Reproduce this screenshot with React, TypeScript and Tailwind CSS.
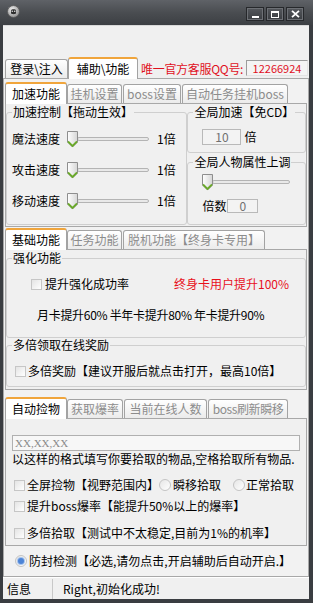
import React from "react";

type TabProps = { label: string; active?: boolean; w: string; dark?: boolean; cls?: string };

function Tab({ label, active, w, dark, cls = "" }: TabProps) {
  if (active) {
    return (
      <div
        className={`${w} ${cls} relative z-10 -mb-px flex h-[22px] shrink-0 items-center justify-center whitespace-nowrap rounded-t-[3px] border border-b-0 border-[#a3a3a3] border-t-2 border-t-[#f0a53c] bg-white pb-[1px] text-black`}
      >
        {label}
      </div>
    );
  }
  return (
    <div
      className={`${w} ${cls} flex h-[19px] shrink-0 items-center justify-center whitespace-nowrap rounded-t-[3px] border border-b-0 border-[#a3a3a3] bg-gradient-to-b from-white to-[#ebebeb] ${dark ? "text-black" : "text-[#8c8c8c]"}`}
    >
      {label}
    </div>
  );
}

function Checkbox() {
  return <span className="inline-block h-[11px] w-[11px] shrink-0 border border-[#c6c6c6] bg-gradient-to-br from-[#e4e4e4] to-white" />;
}

function Radio({ checked }: { checked?: boolean }) {
  return (
    <span className="flex h-[12px] w-[12px] shrink-0 items-center justify-center rounded-full border border-[#c4c4c4] bg-gradient-to-br from-[#e6e6e6] to-white">
      {checked && <span className="h-[6px] w-[6px] rounded-full bg-[#4d84d6] shadow-[0_0_0_1px_#a9c6ee]" />}
    </span>
  );
}

function Thumb() {
  return (
    <svg width="11" height="17" viewBox="0 0 11 17" className="relative z-10 shrink-0">
      <defs>
        <linearGradient id="thumbg" x1="0" x2="1" y1="0" y2="0">
          <stop offset="0" stopColor="#ffffff" />
          <stop offset="1" stopColor="#d6d6d6" />
        </linearGradient>
      </defs>
      <path d="M0.5 0.5H10.5V11L5.5 16L0.5 11Z" fill="url(#thumbg)" stroke="#8e8e8e" />
      <path d="M1 10.5L5.5 15L10 10.5" fill="none" stroke="#6aa92a" strokeWidth="1.8" />
    </svg>
  );
}

function Slider({ track }: { track: string }) {
  return (
    <div className="flex items-start">
      <Thumb />
      <span className={`${track} -ml-[1px] mt-[6px] h-[4px] rounded-[2px] border border-[#b4b4b4] bg-[#e9e9e9]`} />
    </div>
  );
}

function Legend({ children }: { children: React.ReactNode }) {
  return <legend className="ml-[5px] px-[1px] leading-[12px]">{children}</legend>;
}

function TitleBar() {
  return (
    <div className="flex h-[25px] shrink-0 items-start bg-gradient-to-b from-[#5f6267] via-[#4a4d51] to-[#3c3f43]">
      <svg width="13" height="13" viewBox="0 0 13 13" className="ml-[7px] mt-[5px]">
        <defs>
          <radialGradient id="ico" cx="0.4" cy="0.35" r="0.7">
            <stop offset="0" stopColor="#f2f2f2" />
            <stop offset="1" stopColor="#8a8a8a" />
          </radialGradient>
        </defs>
        <circle cx="6.5" cy="6.5" r="6" fill="url(#ico)" stroke="#555" strokeWidth="0.8" />
        <path d="M4 5.5C4 3.8 9 3.8 9 5.5V8C9 9.6 4 9.6 4 8Z" fill="#2e2e2e" />
        <circle cx="5.3" cy="6.2" r="0.8" fill="#ddd" />
        <circle cx="7.7" cy="6.2" r="0.8" fill="#ddd" />
      </svg>
      <div className="ml-auto mr-[9px] mt-[7px] flex gap-[2px]">
        {[0, 1, 2].map((i) => (
          <div
            key={i}
            className="flex h-[14px] w-[18px] items-center justify-center border border-[#26282b] bg-gradient-to-b from-[#55585d] to-[#3a3d41] shadow-[inset_0_0_0_1px_#6d7075]"
          >
            {i === 0 && <span className="mt-[5px] h-[2px] w-[7px] bg-white" />}
            {i === 1 && <span className="h-[7px] w-[8px] border border-t-2 border-white" />}
            {i === 2 && (
              <svg width="9" height="8" viewBox="0 0 9 8">
                <path d="M1 0.8L8 7.2M8 0.8L1 7.2" stroke="white" strokeWidth="1.8" />
              </svg>
            )}
          </div>
        ))}
      </div>
    </div>
  );
}

export default function App() {
  return (
    <div className="flex h-[603px] w-[313px] flex-col bg-[#3a3d41] font-[family-name:'Noto_Sans_CJK_SC',sans-serif] text-[12px] leading-[14px] text-black">
      <TitleBar />
      <div className="ml-[3px] mr-[4px] flex flex-1 flex-col bg-[#f0f0f0]">
        <div className="h-[32px] shrink-0 border-t border-[#d9d9d9]" />

        <div className="flex h-[21px] shrink-0 items-end pl-[2px]">
          <Tab label="登录\注入" w="w-[63px]" dark />
          <Tab label="辅助\功能" w="w-[70px]" active />
          <span className="mb-[2px] ml-[3px] shrink-0 whitespace-nowrap tracking-[-0.3px] text-[#e0101e]">唯一官方客服QQ号:</span>
          <span className="mb-[2px] ml-auto mr-[1px] flex h-[16px] w-[62px] shrink-0 items-center justify-center border border-[#9c9c9c] border-r-[#e4e4e4] border-b-[#e4e4e4] bg-[#f4f4f4] text-[11px] text-[#e0101e]">
            12266924
          </span>
        </div>

        <div className="flex flex-1 flex-col border border-[#a8a8a8] bg-[#f2f2f2] px-[1px] pt-[2px]">
          {/* row 1 */}
          <div className="flex h-[22px] shrink-0 items-end">
            <Tab label="加速功能" w="w-[62px]" active />
            <Tab label="挂机设置" w="w-[55px]" />
            <Tab label="boss设置" w="w-[58px]" cls="ml-[1px]" />
            <Tab label="自动任务挂机boss" w="w-[106px]" cls="ml-[1px]" />
          </div>
          <div className="flex h-[124px] shrink-0 border border-[#a8a8a8] bg-[#f0f0f0]">
            <fieldset className="mt-[2px] h-[119px] w-[182px] rounded-[3px] border border-[#cfcfcf]">
              <Legend>加速控制【拖动生效】</Legend>
              <div className="mt-[5px] flex flex-col pl-[5px]">
                {["魔法速度", "攻击速度", "移动速度"].map((t) => (
                  <div key={t} className="flex h-[31px] items-center">
                    <span className="w-[55px]">{t}</span>
                    <div className="mt-[2px]">
                      <Slider track="w-[72px]" />
                    </div>
                    <span className="ml-[8px]">1倍</span>
                  </div>
                ))}
              </div>
            </fieldset>
            <div className="flex w-[119px] flex-col">
              <fieldset className="mt-[2px] h-[47px] rounded-[3px] border border-[#cfcfcf]">
                <Legend>全局加速【免CD】</Legend>
                <div className="mt-[11px] flex items-center pl-[14px]">
                  <span className="flex h-[16px] w-[39px] items-center justify-center border border-[#b9b9b9] bg-[#f3f3f3] text-[#707070]">
                    10
                  </span>
                  <span className="ml-[3px]">倍</span>
                </div>
              </fieldset>
              <fieldset className="mt-[3px] h-[69px] rounded-[3px] border border-[#cfcfcf]">
                <Legend>全局人物属性上调</Legend>
                <div className="mt-[6px] pl-[14px]">
                  <Slider track="w-[78px]" />
                </div>
                <div className="mt-[8px] flex items-center pl-[14px]">
                  <span>倍数</span>
                  <span className="ml-[1px] flex h-[14px] w-[31px] items-center justify-center border border-[#b9b9b9] bg-[#f3f3f3] text-[#707070]">
                    0
                  </span>
                </div>
              </fieldset>
            </div>
          </div>

          {/* row 2 */}
          <div className="flex h-[22px] shrink-0 items-end">
            <Tab label="基础功能" w="w-[62px]" active />
            <Tab label="任务功能" w="w-[55px]" />
            <Tab label="脱机功能【终身卡专用】" w="w-[142px]" cls="ml-[1px]" />
          </div>
          <div className="flex h-[141px] shrink-0 flex-col border border-[#a8a8a8] bg-[#f0f0f0]">
            <fieldset className="mt-[2px] h-[86px] rounded-[3px] border border-[#cfcfcf]">
              <Legend>强化功能</Legend>
              <div className="mt-[12px] flex h-[16px] items-center pl-[24px]">
                <Checkbox />
                <span className="ml-[3px]">提升强化成功率</span>
                <span className="ml-[45px] text-[#e8101c]">终身卡用户提升100%</span>
              </div>
              <div className="mt-[15px] flex h-[16px] items-center pl-[30px] tracking-[-0.3px]">
                月卡提升60% 半年卡提升80% 年卡提升90%
              </div>
            </fieldset>
            <fieldset className="mt-[1px] h-[48px] rounded-[3px] border border-[#cfcfcf]">
              <Legend>多倍领取在线奖励</Legend>
              <div className="mt-[12px] flex h-[16px] items-center pl-[8px]">
                <Checkbox />
                <span className="ml-[2px]">多倍奖励【建议开服后就点击打开，最高10倍】</span>
              </div>
            </fieldset>
          </div>

          {/* row 3 */}
          <div className="mt-[4px] flex h-[24px] shrink-0 items-end">
            <Tab label="自动捡物" w="w-[62px]" active />
            <Tab label="获取爆率" w="w-[56px]" />
            <Tab label="当前在线人数" w="w-[83px]" cls="ml-[1px]" />
            <Tab label="boss刷新瞬移" w="w-[80px]" cls="ml-[1px] tracking-[-0.4px]" />
          </div>
          <div className="flex h-[128px] shrink-0 flex-col border border-[#a8a8a8] bg-[#f0f0f0] px-[6px] pt-[16px]">
            <div className="flex h-[16px] items-center border border-[#b0b0b0] bg-[#f7f7f7] pl-[2px] font-[family-name:'Liberation_Serif',serif] text-[11px] text-[#8a8a8a]">
              XX,XX,XX
            </div>
            <div className="flex h-[16px] items-center">以这样的格式填写你要拾取的物品,空格拾取所有物品.</div>
            <div className="mt-[10px] flex h-[16px] items-center pl-[2px]">
              <Checkbox />
              <span className="ml-[2px]">全屏捡物【视野范围内】</span>
              <Radio />
              <span className="ml-[2px]">瞬移拾取</span>
              <span className="ml-[12px]" />
              <Radio />
              <span className="ml-[1px]">正常拾取</span>
            </div>
            <div className="mt-[5px] flex h-[16px] items-center pl-[2px]">
              <Checkbox />
              <span className="ml-[2px]">提升boss爆率【能提升50%以上的爆率】</span>
            </div>
            <div className="mt-[11px] flex h-[16px] items-center pl-[2px]">
              <Checkbox />
              <span className="ml-[2px]">多倍拾取【测试中不太稳定,目前为1%的机率】</span>
            </div>
          </div>
          <div className="flex flex-1 items-center pl-[10px]">
            <Radio checked />
            <span className="ml-[2px]">防封检测【必选,请勿点击,开启辅助后自动开启.】</span>
          </div>
        </div>

        <div className="flex h-[22px] shrink-0 items-center border-t border-white bg-[#f0f0f0]">
          <span className="w-[49px] pl-[4px]">信息</span>
          <span className="h-[20px] w-px bg-[#c8c8c8]" />
          <span className="ml-[10px]">Right,初始化成功!</span>
        </div>
      </div>
      <div className="h-[4px] shrink-0" />
    </div>
  );
}
